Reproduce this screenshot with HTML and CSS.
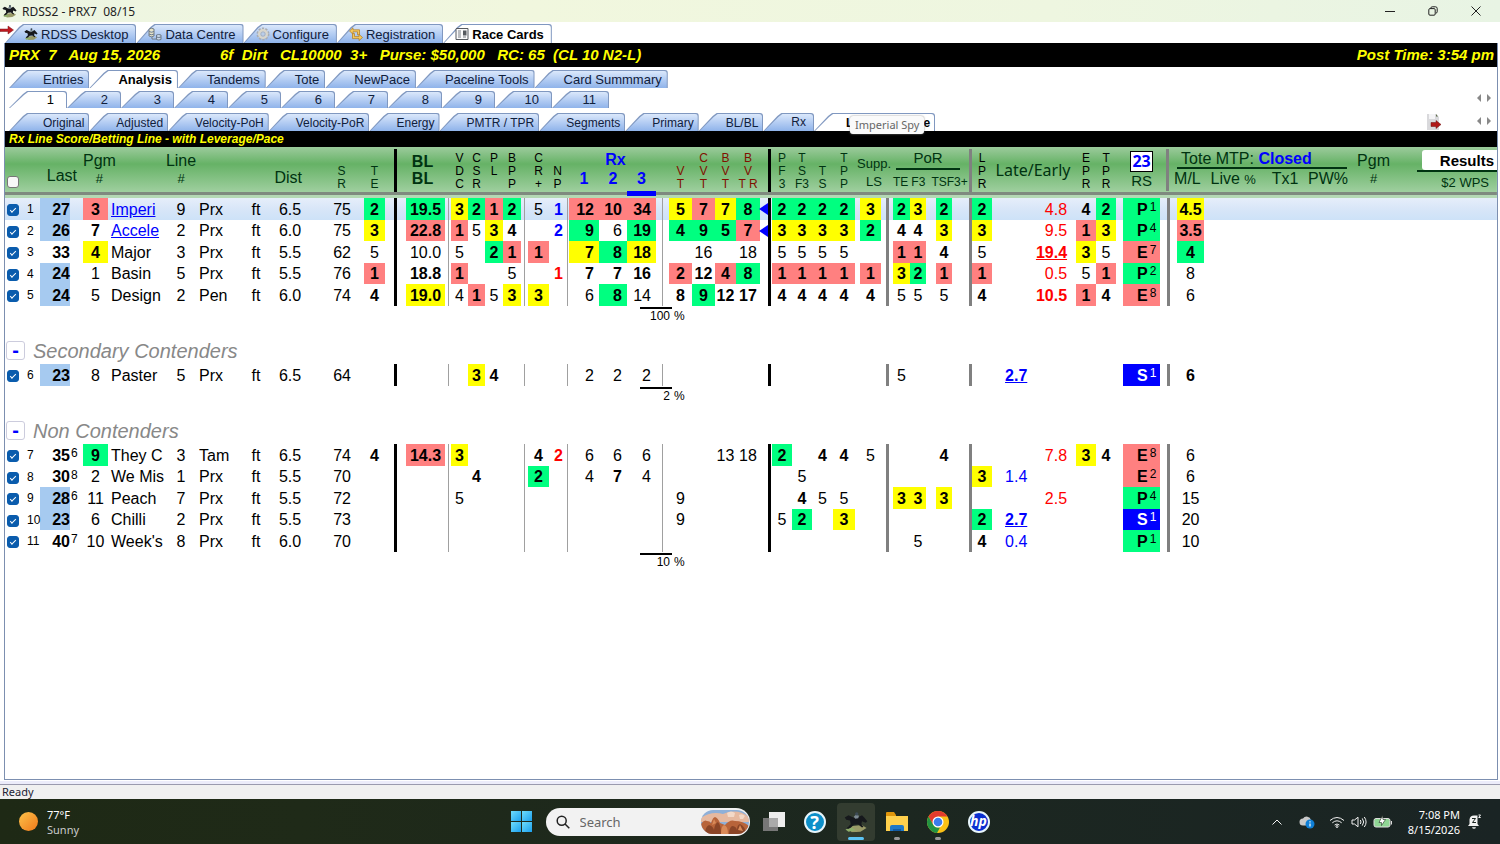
FILE: index.html
```html
<!DOCTYPE html>
<html lang="en">
<head>
<meta charset="utf-8">
<title>RDSS2 - PRX7 08/15</title>
<link rel="stylesheet" href="styles.css">
</head>
<body>
<svg class="defs" aria-hidden="true">
  <symbol id="horse" viewBox="0 0 16 14">
    <path fill="#9a9a68" d="M3 10l9-1 3 2-4 2.500-6 .3z"/>
    <path fill="#8fae6a" d="M1 12l4-1.500 3 2-5 1z"/>
    <path fill="#16181c" d="M.5 4L3 2.500l3.500 1.700 3.500-.7 2-1 1.500 1.500L15.500 6.500l-1 1-2.500-1-.5 2 1.500 1.600-1 .6-2.500-2-3 .2-2 2-2 .8-.5-.8L4.500 8.500 4 6 1.500 5.500z"/>
    <path fill="#7d8a93" d="M6.500 3.500L8 2l2 .8-.5 1.700-2 .4z"/>
    <circle cx="8.500" cy="1.600" r="1.100" fill="#3c4a55"/>
  </symbol>
</svg>

<header class="titlebar">
  <svg class="app-icon" aria-hidden="true"><use href="#horse"/></svg>
  <span class="app-title">RDSS2 - PRX7&nbsp; 08/15</span>
  <div class="window-buttons">
    <button type="button" aria-label="Minimize"><svg viewBox="0 0 10 10"><path d="M0 5.500h10"/></svg></button>
    <button type="button" aria-label="Restore"><svg viewBox="0 0 10 10"><path d="M.8 3.800q0-1.200 1.200-1.200h4q1.200 0 1.200 1.200V8q0 1.200-1.200 1.200H2Q.8 9.200.8 8zM2.800 2.400V2Q3 .8 4.200.8h3.300q1.700 0 1.700 1.700v3.300Q9.200 7 7.800 7.200"/></svg></button>
    <button type="button" aria-label="Close"><svg viewBox="0 0 10 10"><path d="M.5.5l9 9M9.500.5l-9 9"/></svg></button>
  </div>
</header>

<main class="window">
  <nav class="tabs main-tabs" role="tablist" aria-label="Modules">
    <svg class="exit-arrow" viewBox="0 0 14 10" aria-hidden="true"><path fill="#c01820" stroke="#7c1a1a" stroke-width=".5" d="M0 4h8V1l5.500 4L8 9V6.500H0z"/></svg>
    <button type="button" class="tab" role="tab"><svg viewBox="0 0 16 14"><use href="#horse"/></svg>RDSS Desktop</button>
    <button type="button" class="tab" role="tab"><svg viewBox="0 0 14 14"><g fill="#e8e4c8" stroke="#66727e" stroke-width=".9"><path d="M1 2q2.500-1.500 5 0v7q-2.500 1.500-5 0zM1 4.500q2.500 1.500 5 0M1 7q2.500 1.500 5 0"/><path fill="#c9d8ea" d="M8.500 8q2.200-1 4.500 0v4.500q-2.300 1-4.500 0zM8.500 10q2.200 1 4.500 0M4 10v2h4"/></g></svg>Data Centre</button>
    <button type="button" class="tab" role="tab"><svg viewBox="0 0 14 14"><circle cx="7" cy="7" r="5.500" fill="none" stroke="#a9adb3" stroke-width="2" stroke-dasharray="2.200 1.250"/><circle cx="7" cy="7" r="3.800" fill="none" stroke="#d9d6cc" stroke-width="2.400"/><circle cx="7" cy="7" r="2.200" fill="#b9cdea" stroke="#999" stroke-width=".5"/></svg>Configure</button>
    <button type="button" class="tab" role="tab"><svg viewBox="0 0 14 14"><g fill="#f5c95c" stroke="#b07a1e" stroke-width=".7"><path d="M.5 4L4 .8v2h6.500v5H8.500v-3H4v2.400z"/><path d="M13.500 10.500L10 13.600v-2H3.500v-5h2v3H10V7.300z"/></g></svg>Registration</button>
    <button type="button" class="tab active" role="tab" aria-selected="true"><svg viewBox="0 0 14 14"><path fill="#fafafa" stroke="#55595e" d="M1 1.500h12v11H1z"/><path stroke="#7a7f85" d="M3 4h3M3 6h3M3 8h3M3 10h3M8 10h3"/><path fill="#55595e" d="M8 3.500h3.500v5H8z"/></svg>Race Cards</button>
  </nav>

  <section class="panel">
    <div class="race-bar">
      <span class="race-id">PRX  7   Aug 15, 2026</span>
      <span class="race-info">6f  Dirt   CL10000  3+   Purse: $50,000   RC: 65  (CL 10 N2-L)</span>
      <span class="post-time">Post Time: 3:54 pm</span>
    </div>

    <nav class="tabs view-tabs" role="tablist" aria-label="Views">
      <button type="button" class="tab" role="tab">Entries</button>
      <button type="button" class="tab active" role="tab" aria-selected="true">Analysis</button>
      <button type="button" class="tab" role="tab">Tandems</button>
      <button type="button" class="tab" role="tab">Tote</button>
      <button type="button" class="tab" role="tab">NewPace</button>
      <button type="button" class="tab" role="tab">Paceline Tools</button>
      <button type="button" class="tab" role="tab">Card Summmary</button>
    </nav>

    <nav class="tabs race-tabs" role="tablist" aria-label="Races">
      <button type="button" class="tab active" role="tab" aria-selected="true">1</button>
      <button type="button" class="tab" role="tab">2</button>
      <button type="button" class="tab" role="tab">3</button>
      <button type="button" class="tab" role="tab">4</button>
      <button type="button" class="tab" role="tab">5</button>
      <button type="button" class="tab" role="tab">6</button>
      <button type="button" class="tab" role="tab">7</button>
      <button type="button" class="tab" role="tab">8</button>
      <button type="button" class="tab" role="tab">9</button>
      <button type="button" class="tab wide" role="tab">10</button>
      <button type="button" class="tab wide" role="tab">11</button>
      <span class="tab-scroll"><button type="button" class="prev" aria-label="Previous"></button><button type="button" class="next" aria-label="Next"></button></span>
    </nav>

    <nav class="tabs report-tabs" role="tablist" aria-label="Reports">
      <button type="button" class="tab" role="tab">Original</button>
      <button type="button" class="tab" role="tab">Adjusted</button>
      <button type="button" class="tab" role="tab">Velocity-PoH</button>
      <button type="button" class="tab" role="tab">Velocity-PoR</button>
      <button type="button" class="tab" role="tab">Energy</button>
      <button type="button" class="tab" role="tab">PMTR / TPR</button>
      <button type="button" class="tab" role="tab">Segments</button>
      <button type="button" class="tab" role="tab">Primary</button>
      <button type="button" class="tab" role="tab">BL/BL</button>
      <button type="button" class="tab short" role="tab">Rx</button>
      <span class="tip-anchor"><button type="button" class="tab active" role="tab" aria-selected="true">Leverage/Pace</button><span class="tooltip" role="tooltip">Imperial Spy</span></span>
      <button type="button" class="export" aria-label="Export"><svg viewBox="0 0 16 18"><path fill="#d9d9dc" d="M1 1h9l3 3v13H1z"/><path fill="#f4f4f6" d="M3 1h6v5H3z"/><path fill="#5d6b4a" d="M10 1l2 2.500h-2z"/><path fill="#b01818" stroke="#6c1010" stroke-width=".5" d="M5 9.500h5v-2l5 4-5 4v-2H5z"/></svg></button>
      <span class="tab-scroll"><button type="button" class="prev" aria-label="Previous"></button><button type="button" class="next" aria-label="Next"></button></span>
    </nav>

    <h1 class="report-title">Rx Line Score/Betting Line - with Leverage/Pace</h1>

    <table class="card">
      <colgroup>
        <col class="w20"><col class="w15"><col class="w30"><col class="w13"><col class="w25"><col class="w57"><col class="w32"><col class="w49"><col class="w20"><col class="w48"><col class="w50"><col class="w21">
        <col class="w21"><col class="w39"><col class="w6"><col class="w17"><col class="w17"><col class="w18"><col class="w18"><col class="w7"><col class="w21"><col class="w17"><col class="w3"><col class="w30"><col class="w28"><col class="w29"><col class="w13">
        <col class="w23"><col class="w23"><col class="w21"><col class="w24"><col class="w6"><col class="w6"><col class="w20"><col class="w20"><col class="w21"><col class="w22"><col class="w5"><col class="w21"><col class="w12">
        <col class="w17"><col class="w16"><col class="w10"><col class="w16"><col class="w16"><col class="w4"><col class="w20"><col class="w38"><col class="w46"><col class="w20"><col class="w20"><col class="w7"><col class="w37"><col class="w17"><col class="w27"><col>
      </colgroup>
      <thead>
        <tr>
          <th class="pick"><input type="checkbox" aria-label="Select all"></th>
          <th colspan="3" class="h-last">Last</th>
          <th colspan="2" class="h-top left"><span class="stack">Pgm<br><small>#</small></span></th>
          <th class="h-top"><span class="stack">Line<br><small>#</small></span></th>
          <th colspan="3" class="h-dist">Dist</th>
          <th class="v h-sr">S<br>R</th>
          <th class="v">T<br>E</th>
          <th class="thick"></th>
          <th class="h-bl">BL<br>BL</th>
          <th></th>
          <th class="v dark">V<br>D<br>C</th>
          <th class="v dark">C<br>S<br>R</th>
          <th class="v dark">P<br>L<br>&nbsp;</th>
          <th class="v dark">B<br>P<br>P</th>
          <th></th>
          <th class="v dark">C<br>R<br>+</th>
          <th class="v dark">N<br>P</th>
          <th></th>
          <th colspan="3" class="h-rx"><div class="rx"><span class="rx-name">Rx</span><span>1</span><span>2</span><span class="sorted">3</span></div></th>
          <th></th>
          <th class="v maroon">V<br>T</th>
          <th class="v maroon">C<br>V<br>T</th>
          <th class="v maroon">B<br>V<br>T</th>
          <th class="v maroon">B<br>V<br>T R</th>
          <th></th>
          <th class="thick"></th>
          <th class="v">P<br>F<br>3</th>
          <th class="v">T<br>S<br>F3</th>
          <th class="v">T<br>S</th>
          <th class="v">T<br>P<br>P</th>
          <th colspan="3" class="h-supp">Supp.<br>LS</th>
          <th colspan="5" class="h-por"><div class="por">PoR</div><div class="por-sub"><span>TE</span><span>F3</span><span>TSF3+</span></div></th>
          <th class="mid"></th>
          <th class="v dark">L<br>P<br>R</th>
          <th colspan="2" class="h-late">Late/Early</th>
          <th class="v dark">E<br>P<br>R</th>
          <th class="v dark">T<br>P<br>R</th>
          <th></th>
          <th class="h-rs"><span class="rs-count">23</span><br>RS</th>
          <th colspan="3" class="h-tote"><div class="tote">
            <div class="tote-main"><div class="mtp">Tote MTP: <b>Closed</b></div><div class="tote-cols"><span>M/L</span><span>Live <small>%</small></span><span>Tx1</span><span>PW%</span></div></div>
            <span class="stack tote-pgm">Pgm<br><small>#</small></span>
            <div class="results"><button type="button">Results</button><div>$2 WPS</div></div>
          </div></th>
        </tr>
      </thead>
      <tbody>
        <tr class="current">
          <td><input type="checkbox" checked aria-label="Select 1"><td>1<td class="s">27<td><td class="r">3<td><a href="#imperi">Imperi</a><td>9<td>Prx<td>ft<td>6.5<td>75<td class="g">2
          <td class="thick"><td class="g">19.5<td class="thin"><td class="y">3<td class="g">2<td class="r">1<td class="g">2<td class="thin"><td>5<td class="blue">1<td class="thin"><td class="r">12<td class="r">10<td class="r">34<td class="thin">
          <td class="y">5<td class="r">7<td class="y">7<td class="g">8<td class="arrow"><td class="thick"><td class="g">2<td class="g">2<td class="g">2<td class="g">2<td><td class="y">3<td class="mid">
          <td class="g">2<td class="y">3<td><td class="g">2<td><td class="mid"><td class="g">2<td><td>4.8<td class="b">4<td class="g">2<td><td class="g">P<sup>1</sup><td class="mid"><td class="y">4.5<td></tr>
        <tr>
          <td><input type="checkbox" checked aria-label="Select 2"><td>2<td class="s">26<td><td class="b">7<td><a href="#accele">Accele</a><td>2<td>Prx<td>ft<td>6.0<td>75<td class="y">3
          <td class="thick"><td class="r">22.8<td class="thin"><td class="r">1<td>5<td class="y">3<td class="b">4<td class="thin"><td><td class="blue">2<td class="thin"><td class="g">9<td>6<td class="g">19<td class="thin">
          <td class="g">4<td class="g">9<td class="g">5<td class="r">7<td class="arrow"><td class="thick"><td class="y">3<td class="y">3<td class="y">3<td class="y">3<td><td class="g">2<td class="mid">
          <td class="b">4<td class="b">4<td><td class="y">3<td><td class="mid"><td class="y">3<td><td>9.5<td class="r">1<td class="y">3<td><td class="g">P<sup>4</sup><td class="mid"><td class="r">3.5<td></tr>
        <tr>
          <td><input type="checkbox" checked aria-label="Select 3"><td>3<td>33<td><td class="y">4<td>Major<td>3<td>Prx<td>ft<td>5.5<td>62<td>5
          <td class="thick"><td>10.0<td class="thin"><td>5<td><td class="g">2<td class="r">1<td class="thin"><td class="r">1<td><td class="thin"><td class="y">7<td class="g">8<td class="y">18<td class="thin">
          <td><td>16<td><td>18<td><td class="thick"><td>5<td>5<td>5<td>5<td><td><td class="mid">
          <td class="r">1<td class="r">1<td><td class="b">4<td><td class="mid"><td>5<td><td class="b u">19.4<td class="y">3<td>5<td><td class="r">E<sup>7</sup><td class="mid"><td class="g">4<td></tr>
        <tr>
          <td><input type="checkbox" checked aria-label="Select 4"><td>4<td class="s">24<td><td>1<td>Basin<td>5<td>Prx<td>ft<td>5.5<td>76<td class="r">1
          <td class="thick"><td class="b">18.8<td class="thin"><td class="r">1<td><td><td>5<td class="thin"><td><td class="red">1<td class="thin"><td class="b">7<td class="b">7<td class="b">16<td class="thin">
          <td class="r">2<td class="b">12<td class="r">4<td class="g">8<td><td class="thick"><td class="r">1<td class="r">1<td class="r">1<td class="r">1<td><td class="r">1<td class="mid">
          <td class="y">3<td class="g">2<td><td class="r">1<td><td class="mid"><td class="r">1<td><td>0.5<td>5<td class="r">1<td><td class="g">P<sup>2</sup><td class="mid"><td>8<td></tr>
        <tr>
          <td><input type="checkbox" checked aria-label="Select 5"><td>5<td class="s">24<td><td>5<td>Design<td>2<td>Pen<td>ft<td>6.0<td>74<td class="b">4
          <td class="thick"><td class="y">19.0<td class="thin"><td>4<td class="r">1<td>5<td class="y">3<td class="thin"><td class="y">3<td><td class="thin"><td>6<td class="g">8<td>14<td class="thin">
          <td class="b">8<td class="g">9<td class="b">12<td class="b">17<td><td class="thick"><td class="b">4<td class="b">4<td class="b">4<td class="b">4<td><td class="b">4<td class="mid">
          <td>5<td>5<td><td>5<td><td class="mid"><td class="b">4<td><td class="b">10.5<td class="r">1<td class="b">4<td><td class="r">E<sup>8</sup><td class="mid"><td>6<td></tr>
      </tbody>
      <tbody class="break">
        <tr class="total"><td colspan="56"><span>100</span>%</td></tr>
        <tr class="group"><th colspan="56" scope="rowgroup"><button type="button" aria-label="Collapse Secondary Contenders">-</button>Secondary Contenders</th></tr>
      </tbody>
      <tbody>
        <tr>
          <td><input type="checkbox" checked aria-label="Select 6"><td>6<td class="s">23<td><td>8<td>Paster<td>5<td>Prx<td>ft<td>6.5<td>64<td>
          <td class="thick"><td><td class="thin"><td><td class="y">3<td class="b">4<td><td class="thin"><td><td><td class="thin"><td>2<td>2<td>2<td class="thin">
          <td><td><td><td><td><td class="thick"><td><td><td><td><td><td><td>
          <td>5<td><td><td><td><td class="mid"><td><td class="b u">2.7<td><td><td><td><td class="deep">S<sup>1</sup><td class="mid"><td class="b">6<td></tr>
      </tbody>
      <tbody class="break">
        <tr class="total"><td colspan="56"><span>2</span>%</td></tr>
        <tr class="group"><th colspan="56" scope="rowgroup"><button type="button" aria-label="Collapse Non Contenders">-</button>Non Contenders</th></tr>
      </tbody>
      <tbody>
        <tr>
          <td><input type="checkbox" checked aria-label="Select 7"><td>7<td>35<td>6<td class="g">9<td>They C<td>3<td>Tam<td>ft<td>6.5<td>74<td class="b">4
          <td class="thick"><td class="r">14.3<td class="thin"><td class="y">3<td><td><td><td class="thin"><td class="b">4<td class="red">2<td class="thin"><td>6<td>6<td>6<td class="thin">
          <td><td><td>13<td>18<td><td class="thick"><td class="g">2<td><td class="b">4<td class="b">4<td><td>5<td class="mid">
          <td><td><td><td class="b">4<td><td class="mid"><td><td><td>7.8<td class="y">3<td class="b">4<td><td class="r">E<sup>8</sup><td class="mid"><td>6<td></tr>
        <tr>
          <td><input type="checkbox" checked aria-label="Select 8"><td>8<td>30<td>8<td>2<td>We Mis<td>1<td>Prx<td>ft<td>5.5<td>70<td>
          <td class="thick"><td><td class="thin"><td><td class="b">4<td><td><td class="thin"><td class="g">2<td><td class="thin"><td>4<td class="b">7<td>4<td class="thin">
          <td><td><td><td><td><td class="thick"><td><td>5<td><td><td><td><td class="mid">
          <td><td><td><td><td><td class="mid"><td class="y">3<td>1.4<td><td><td><td><td class="r">E<sup>2</sup><td class="mid"><td>6<td></tr>
        <tr>
          <td><input type="checkbox" checked aria-label="Select 9"><td>9<td class="s">28<td>6<td>11<td>Peach<td>7<td>Prx<td>ft<td>5.5<td>72<td>
          <td class="thick"><td><td class="thin"><td>5<td><td><td><td class="thin"><td><td><td class="thin"><td><td><td><td class="thin">
          <td>9<td><td><td><td><td class="thick"><td><td class="b">4<td>5<td>5<td><td><td class="mid">
          <td class="y">3<td class="y">3<td><td class="y">3<td><td class="mid"><td><td><td>2.5<td><td><td><td class="g">P<sup>4</sup><td class="mid"><td>15<td></tr>
        <tr>
          <td><input type="checkbox" checked aria-label="Select 10"><td>10<td class="s">23<td><td>6<td>Chilli<td>2<td>Prx<td>ft<td>5.5<td>73<td>
          <td class="thick"><td><td class="thin"><td><td><td><td><td class="thin"><td><td><td class="thin"><td><td><td><td class="thin">
          <td>9<td><td><td><td><td class="thick"><td>5<td class="g">2<td><td class="y">3<td><td><td class="mid">
          <td><td><td><td><td><td class="mid"><td class="g">2<td class="b u">2.7<td><td><td><td><td class="deep">S<sup>1</sup><td class="mid"><td>20<td></tr>
        <tr>
          <td><input type="checkbox" checked aria-label="Select 11"><td>11<td>40<td>7<td>10<td>Week's<td>8<td>Prx<td>ft<td>6.0<td>70<td>
          <td class="thick"><td><td class="thin"><td><td><td><td><td class="thin"><td><td><td class="thin"><td><td><td><td class="thin">
          <td><td><td><td><td><td class="thick"><td><td><td><td><td><td><td class="mid">
          <td><td>5<td><td><td><td class="mid"><td class="b">4<td>0.4<td><td><td><td><td class="g">P<sup>1</sup><td class="mid"><td>10<td></tr>
      </tbody>
      <tbody class="break">
        <tr class="total"><td colspan="56"><span>10</span>%</td></tr>
      </tbody>
    </table>
  </section>
</main>

<div class="statusbar">Ready</div>

<footer class="taskbar">
  <div class="weather"><span class="sun"></span><div>77°F<br><span>Sunny</span></div></div>
  <div class="pinned">
    <button type="button" class="start" aria-label="Start"><i></i><i></i><i></i><i></i></button>
    <label class="search">
      <svg viewBox="0 0 14 14" aria-hidden="true"><circle cx="5.700" cy="5.700" r="4.500"/><path d="M9 9l4.300 4.300"/></svg>
      <input type="search" placeholder="Search" aria-label="Search">
      <svg class="scene" viewBox="0 0 48 24" preserveAspectRatio="none" aria-hidden="true"><path fill="#8fb0d8" d="M0 0h48v24H0z"/><path fill="#e6b9a0" d="M0 8q10-7 22-4 14-6 26 3v5H0z"/><path fill="#f3d9c8" d="M26 3q4-3 8 0l-1 4h-6zM38 5q3-2 6 1l-2 3h-3z"/><path fill="#b8643a" d="M0 14q3-5 6-3 3 0 4 2 2-6 4-6 3 1 5 6l5 2q5-6 10-4 8 0 14 5v9H0z"/><path fill="#8a4527" d="M4 24q0-7 4-9 4 1 5 5 1-7 4-8 3 3 3 12zM28 24q0-6 3-8 4 0 5 4 0-5 3-6 5 2 6 10z"/><path fill="#d98a58" d="M13 9l2 4-4 2zM20 24q0-8 3-9 4 1 4 9zM39 15l3 6-5-1z"/></svg>
    </label>
    <button type="button" aria-label="Task view"><svg viewBox="0 0 24 24"><path fill="#eee" d="M7 2h16v15H7z"/><path fill="#777" d="M1 8h15v13H1z"/><path fill="#aaa" d="M7 8h9v9H7z"/></svg></button>
    <button type="button" class="help" aria-label="Help"><span>?</span></button>
    <button type="button" class="open focused" aria-label="RDSS2"><svg viewBox="0 0 16 14"><use href="#horse"/></svg></button>
    <button type="button" class="open" aria-label="File Explorer"><svg viewBox="0 0 24 24"><path fill="#e0960c" d="M1 3q0-1 1-1h7l2 3v5H1z"/><path fill="#ffd04c" d="M1 6h22v15H1z"/><path fill="#1f78c8" d="M5 21v-4q0-2 2-2h10q2 0 2 2v4z"/><path fill="#125ba3" d="M8 19h8v2H8z"/></svg></button>
    <button type="button" class="open" aria-label="Chrome"><svg viewBox="0 0 24 24"><circle cx="12" cy="12" r="11" fill="#fbc116"/><path fill="#e33b2e" d="M2.500 6.500A11 11 0 0 1 21.500 6.500H12L7.200 14.700z"/><path fill="#229342" d="M2.500 6.500L7.200 14.700Q9 17.500 12 17.500h2L11 23A11 11 0 0 1 2.500 6.500z"/><circle cx="12" cy="12" r="5.500" fill="#fff"/><circle cx="12" cy="12" r="4.300" fill="#3b7ded"/></svg></button>
    <button type="button" class="hp" aria-label="HP"><span>hp</span></button>
  </div>
  <div class="tray">
    <svg class="chevron" viewBox="0 0 10 10" aria-hidden="true"><path d="M.5 7.500L5 3l4.500 4.500"/></svg>
    <svg class="cloud" viewBox="0 0 16 14" aria-hidden="true"><path fill="#c9c9c9" d="M4 10.500a3.500 3.500 0 0 1 0-7 4.500 4.500 0 0 1 8 1.500 3 3 0 0 1 0 5.500z"/><circle cx="11" cy="9" r="4.500" fill="#0f7fd6"/><path stroke="#fff" stroke-width="1.200" d="M11 8.500v3M11 6.300v1.200"/></svg>
    <svg class="wifi" viewBox="0 0 16 12" aria-hidden="true"><path d="M1 4.500q7-6 14 0M3.300 6.800q4.700-4 9.400 0M5.600 9q2.400-2 4.800 0"/><circle cx="8" cy="10.500" r="1"/></svg>
    <svg class="sound" viewBox="0 0 16 12" aria-hidden="true"><path d="M1 4h2.500L7 1.200v9.600L3.500 8H1zM9.300 4q1.400 2 0 4M11.300 2.400q2.700 3.600 0 7.200M13.300 1q3.600 5 0 10"/></svg>
    <svg class="battery" viewBox="0 0 20 14" aria-hidden="true"><rect x="1" y="3.500" width="16" height="8.500" rx="2" fill="#8fd694" stroke="#ddd"/><path stroke="#ddd" d="M18.500 6v3.500"/><path fill="#fff" stroke="#1e2a1e" stroke-width=".6" d="M9.500.5L6 7.500h2.500v3l4-6H10z"/></svg>
    <div class="clock">7:08 PM<br>8/15/2026</div>
    <svg class="bell" viewBox="0 0 14 16" aria-hidden="true"><path fill="#f2f2f2" d="M1 12l1.500-2V5.500Q3 1.500 7 1.500h3.500v8.500l1.500 2zM5 13.200h4q-.4 1.600-2 1.600t-2-1.600z"/><path fill="none" stroke="#1c2622" d="M5 4.500h3.500L5.500 8.500H9"/><path fill="none" stroke="#f2f2f2" d="M11.500 1h2L11.700 3.500h2"/></svg>
  </div>
</footer>
</body>
</html>
```
FILE: styles.css
```css
* { box-sizing: border-box; }

body {
  margin: 0;
  min-height: 100vh;
  display: flex;
  flex-direction: column;
  font-family: "Liberation Sans", Arial, sans-serif;
  font-size: 16px;
  color: #000;
  background: #fff;
}

button { font: inherit; color: inherit; border: 0; padding: 0; margin: 0; background: none; }
.defs { display: none; }

/* Title bar */
.titlebar {
  display: flex;
  align-items: center;
  height: 22px;
  padding-left: 2px;
  background: linear-gradient(90deg, #edf5e2, #f1f7de 35%, #eef6e0 70%, #e8f4e4);
  font: 12px "Noto Sans", sans-serif;
  color: #222;
}
.app-icon { width: 15px; height: 14px; margin-right: 5px; }
.window-buttons { display: flex; margin-left: auto; padding-right: 3px; }
.window-buttons button { width: 43px; height: 20px; display: grid; place-items: center; }
.window-buttons svg { width: 10px; height: 10px; fill: none; stroke: #222; }

/* Window frame */
.window {
  flex: 1;
  display: flex;
  flex-direction: column;
  padding: 2px 2px 4px 4px;
  background: #fff;
  border-bottom: 1px solid #9a9aae;
  box-shadow: inset 0 -3px #ececfa;
}
.panel {
  flex: 1;
  border: 1px solid #7c8fb0;
  border-width: 0 1px 1px;
  background: #fff;
}

/* Tabs */
.tabs { display: flex; align-items: flex-end; font-size: 13px; }
.tab {
  position: relative;
  z-index: 0;
  display: flex;
  align-items: center;
  justify-content: flex-end;
  height: 18px;
  padding: 1px 6px 0 29px;
  white-space: nowrap;
  color: #10203c;
  background: #8098c0;
  border-radius: 0 3px 0 0;
  clip-path: polygon(0 100%, 14px 3px, 18px 0, 100% 0, 100% 100%);
}
.tab::before {
  content: "";
  position: absolute;
  z-index: -1;
  inset: 1px 1px 0 1px;
  border-radius: 0 3px 0 0;
  background: linear-gradient(#dbe8fb, #b4cdf3 50%, #8fb3ea);
  clip-path: polygon(0 100%, 14px 3px, 18px 0, 100% 0, 100% 100%);
}
.tab.active { font-weight: bold; color: #000; }
.tab.active::before { background: #fff; }
.main-tabs { height: 19px; }
.main-tabs .tab { height: 19px; padding: 1px 8px 0 12px; }
.main-tabs .tab svg { width: 14px; height: 14px; margin-right: 3px; }
.main-tabs .tab:nth-of-type(1) { padding-left: 19px; }
.exit-arrow { width: 14px; height: 10px; margin: 0 -9px 8px -4px; }
.view-tabs { height: 21px; padding-left: 4px; }
.race-tabs { height: 20px; padding-left: 4px; }
.race-tabs .tab { width: 53px; height: 17px; padding: 0 13px 0 0; }
.race-tabs .tab:nth-child(even) { width: 54px; }
.race-tabs .tab:first-child { width: 58px; }
.race-tabs .tab.wide { width: 57px; }
.race-tabs .tab.active { font-weight: normal; }
.report-tabs { height: 23px; padding-left: 4px; font-size: 12px; }
.report-tabs .tab { padding: 1px 5px 0 27px; }
.report-tabs .short { padding: 0 8px 0 28px; }
.report-tabs .active { padding-left: 32px; }
.view-tabs .tab:first-child, .report-tabs > .tab:first-child { padding-left: 34px; }
.tab-scroll { display: flex; gap: 6px; width: 20px; height: 12px; margin: 0 0 2px auto; }
.export + .tab-scroll { margin-left: 35px; }
.tab-scroll button { width: 0; height: 0; border: 4px solid transparent; }
.tab-scroll .prev { border-left-width: 0; border-right-color: #888; }
.tab-scroll .next { border-right-width: 0; border-left-color: #888; }
.export { width: 16px; height: 18px; margin-left: auto; }
.export svg { display: block; width: 16px; height: 18px; }
.tip-anchor { position: relative; }
.tooltip {
  position: absolute;
  z-index: 2;
  left: 36px;
  top: 3px;
  padding: 0 5px;
  line-height: 18px;
  white-space: nowrap;
  font-family: "Noto Sans", sans-serif;
  font-size: 11px;
  color: #666;
  background: #fafafa;
  border-radius: 3px;
  box-shadow: 0 0 2px #888;
}

/* Black bars */
.race-bar {
  display: flex;
  height: 24px;
  padding: 0 3px 0 4px;
  background: #000;
  color: #ff0;
  font: italic bold 15px/24px "Liberation Sans", Arial, sans-serif;
  white-space: pre;
}
.race-id { width: 211px; }
.post-time { margin-left: auto; }
.report-title {
  margin: 0;
  height: 16px;
  padding-left: 4px;
  background: #000;
  color: #ff0;
  font: italic bold 12px/16px "Liberation Sans", Arial, sans-serif;
}

/* Race card */
.card { width: 100%; table-layout: fixed; border-collapse: separate; border-spacing: 0; }
.card td, .card th { padding: 0; text-align: center; white-space: nowrap; font-weight: normal; }
.w3 { width: 3px; } .w4 { width: 4px; } .w5 { width: 5px; } .w6 { width: 6px; } .w7 { width: 7px; }
.w10 { width: 10px; } .w12 { width: 12px; } .w13 { width: 13px; } .w15 { width: 15px; } .w16 { width: 16px; }
.w17 { width: 17px; } .w18 { width: 18px; } .w20 { width: 20px; } .w21 { width: 21px; } .w22 { width: 22px; }
.w23 { width: 23px; } .w24 { width: 24px; } .w25 { width: 25px; } .w27 { width: 27px; } .w28 { width: 28px; }
.w29 { width: 29px; } .w30 { width: 30px; } .w32 { width: 32px; } .w37 { width: 37px; } .w38 { width: 38px; }
.w39 { width: 39px; } .w46 { width: 46px; } .w48 { width: 48px; } .w49 { width: 49px; } .w50 { width: 50px; }
.w57 { width: 57px; }

.card thead tr {
  height: 51px;
  background: linear-gradient(#9ccb9c 0, #66b266 17px, #9fcf9f 45px, #7f8a7f 45px, #7f8a7f 48px, #b4d8b4 48px);
}
.card thead th { height: 51px; vertical-align: top; color: #031; line-height: 17px; }
.card th small { font-size: 13px; line-height: 13px; }
.card thead .left { text-align: left; }
.stack { display: inline-block; text-align: center; }
.card thead .pick { vertical-align: bottom; padding: 0 5px 10px 0; }
.card thead .h-last { padding: 20px 6px 0 0; text-align: right; }
.card thead .h-top { padding-top: 5px; }
.card thead .h-dist { padding: 22px 12px 0 0; text-align: right; }
.card thead .v { font-size: 12px; line-height: 13px; vertical-align: bottom; padding-bottom: 7px; }
.card thead .h-sr { padding-left: 5px; }
.card thead .dark { color: #000; }
.card thead .maroon { color: #801000; }
.card thead .h-bl { font-weight: bold; padding: 6px 6px 0 0; }
.card thead .h-rx { color: #00f; font-weight: bold; }
.rx { display: grid; grid-template-columns: 30px 28px 29px; grid-template-rows: 23px 26px; }
.rx-name { grid-column: 1 / -1; padding: 4px 0 0 6px; }
.sorted { border-bottom: 5px solid #00f; }
.card thead .h-supp { font-size: 13px; line-height: 18px; padding-top: 8px; }
.card thead .h-por { font-size: 12px; }
.por { font-size: 15px; line-height: 20px; margin: 1px 8px 0 3px; border-bottom: 2px solid #031; }
.por-sub { display: flex; gap: 3px; padding-top: 4px; }
.por-sub span:last-child { margin-left: 3px; }
.card thead .h-late { font: 16px/20px "Noto Sans", sans-serif; padding: 13px 2px 0 0; }
.card thead .h-rs { padding-top: 4px; font-size: 15px; }
.rs-count {
  display: inline-block;
  width: 23px;
  border: 1px solid #000;
  background: #fff;
  color: #00f;
  font: bold 16px/19px "Noto Sans", sans-serif;
}
.card thead .h-tote { text-align: left; background: linear-gradient(#808080, #808080) 6px 2px / 3px 42px no-repeat; }
.tote { display: flex; padding-left: 14px; }
.tote-main { width: 174px; padding-top: 3px; }
.mtp { margin: 0 1px 0 3px; padding-left: 4px; border-bottom: 2px solid #031; white-space: pre; }
.mtp b { color: #00f; }
.tote-cols { display: flex; justify-content: space-between; line-height: 19px; }
.tote-cols span:nth-child(2) { margin-right: 6px; }
.tote-pgm { margin-left: 9px; padding-top: 5px; }
.results { width: 80px; margin-left: auto; padding-top: 3px; font-size: 13px; text-align: right; }
.results button {
  display: block;
  width: 75px;
  height: 20px;
  margin-left: auto;
  padding-right: 3px;
  text-align: right;
  font-size: 15px;
  font-weight: bold;
  color: #000;
  background: #fff;
  border-radius: 3px 0 0 3px;
}
.results div { padding: 2px 8px 0 0; border-top: 2px solid #031; }

.card tbody tr { height: 22px; }
.card tbody tr:nth-child(even) { height: 21px; }
.card tbody td { line-height: 21px; }
.card .current { background: linear-gradient(#e6eefa, #d8e6f8 50%, #cde2f8); }
.card .s { background: #a6caf0; }
.card .r { background: #ff8080; font-weight: bold; }
.card .g { background: #00ff80; font-weight: bold; }
.card .y { background: #ff0; font-weight: bold; }
.card .deep { background: #00f; color: #fff; font-weight: bold; }
.card .b { font-weight: bold; }
.card .red { color: #f00; font-weight: bold; }
.card .blue { color: #00f; font-weight: bold; }
.card .u { text-decoration: underline; }
.card a { color: #00f; }
.card .thick { background: linear-gradient(#000, #000) center / 3px 100% no-repeat; }
.card .mid { background: linear-gradient(#808080, #808080) center / 3px 100% no-repeat; }
.card .thin { background: linear-gradient(#a0a0a0, #a0a0a0) center / 1px 100% no-repeat; }
.card thead .thick, .card thead .mid { background-size: 3px 43px; background-position: center 2px; }
.card tbody td:nth-child(40) { background: linear-gradient(#808080, #808080) center / 3px 100% no-repeat; }
.arrow::before {
  content: "";
  display: block;
  width: 0;
  margin-left: -1px;
  border: solid transparent;
  border-width: 6px 9px 6px 0;
  border-right-color: #00f;
}

.card td:nth-child(1) { padding-right: 5px; }
.card td:nth-child(2) { font-size: 12px; text-align: left; padding-left: 2px; line-height: 18px; }
.card td:nth-child(3) { text-align: right; font-weight: bold; }
.card td:nth-child(4) { text-align: left; padding-left: 1px; font-size: 12px; vertical-align: top; line-height: 18px; }
.card td:nth-child(6) { text-align: left; padding-left: 3px; }
.card td:nth-child(8) { text-align: left; padding-left: 2px; }
.card td:nth-child(11) { text-align: right; padding-right: 13px; }
.card td:nth-child(22) { padding-left: 2px; }
.card td:nth-child(n+24):nth-child(-n+26) { text-align: right; padding-right: 5px; }
.card td:nth-child(48) { text-align: left; padding-left: 13px; color: #00f; }
.card td:nth-child(49) { text-align: right; padding-right: 9px; color: #f00; }
.card td:nth-child(53) { text-align: left; padding-left: 14px; }
.card sup { font-size: 12px; font-weight: normal; line-height: 12px; vertical-align: 4px; margin-left: 2px; }

.card input {
  appearance: none;
  display: block;
  width: 12px;
  height: 12px;
  margin: 2px auto 0;
  border: 1px solid #777;
  border-radius: 3px;
  background: #f8f8f8;
}
.card input:checked { border-color: #0a5cad; background: #0a5cad; }
.card input:checked::after {
  content: "";
  display: block;
  width: 5px;
  height: 2px;
  margin: 3px 2px;
  border: solid #fff;
  border-width: 0 0 1px 1px;
  transform: rotate(-45deg);
}

.card .break .total { height: 20px; }
.card .total td:first-child { padding: 1px 0 0 635px; text-align: left; vertical-align: top; font-size: 12px; font-weight: normal; line-height: 15px; }
.total span { display: inline-block; width: 32px; margin-right: 2px; padding-right: 2px; border-top: 2px solid #000; text-align: right; }
.card .break .group { height: 38px; }
.card .group th { text-align: left; vertical-align: bottom; padding-bottom: 1px; font-size: 20px; line-height: 23px; font-style: italic; color: #888; }
.group button {
  width: 19px;
  height: 19px;
  margin: 0 8px 0 1px;
  border: 1px solid #ccd;
  border-radius: 3px;
  background: #fff;
  color: #00f;
  font: bold 20px/16px "Liberation Sans", Arial, sans-serif;
  vertical-align: 1px;
}

/* Status bar */
.statusbar { height: 14px; padding-left: 2px; background: #f0f0f0; font: 11px/13px "Noto Sans", sans-serif; color: #223; }

/* Taskbar */
.taskbar {
  display: grid;
  grid-template-columns: 1fr auto 1fr;
  align-items: center;
  height: 45px;
  background: linear-gradient(90deg, #1e2915, #1f2a18 20%, #1c2720 60%, #1a2424);
  color: #fff;
  font: 11px/15px "Noto Sans", sans-serif;
}
.weather { display: flex; align-items: center; gap: 9px; padding-left: 19px; }
.weather div span { color: #ccc; }
.sun { width: 19px; height: 19px; border-radius: 50%; background: linear-gradient(135deg, #fdc24a, #f0791a); }
.pinned { display: flex; align-items: center; gap: 3px; padding-left: 8px; }
.pinned button { position: relative; width: 38px; height: 38px; display: grid; place-items: center; }
.pinned button svg { width: 24px; height: 24px; }
.pinned .start { width: 22px; height: 22px; grid-template-columns: 10px 10px; gap: 1px; place-content: center; margin-right: 10px; }
.start i { width: 10px; height: 10px; background: linear-gradient(135deg, #6fdcfb, #1ba0ee); }
.search { display: flex; align-items: center; width: 204px; height: 28px; margin-right: 2px; padding: 0 1px 0 10px; border-radius: 14px; background: #f2f2f2; }
.search svg { flex: none; width: 14px; height: 14px; fill: none; stroke: #222; stroke-width: 1.5; }
.search input { flex: 1; min-width: 0; margin-left: 10px; padding: 0; border: 0; outline: 0; background: none; font: 13px "Noto Sans", sans-serif; }
.search input::placeholder { color: #666; opacity: 1; }
.search .scene { width: 48px; height: 24px; border-radius: 12px; stroke: none; }
.help span, .hp span { width: 22px; height: 22px; border-radius: 50%; border: 2px solid #e8f6fc; background: #0c8fc9; font: bold 18px/18px "Noto Sans", sans-serif; }
.hp span { background: #0a2fd0; font: italic bold 14px/15px "Noto Sans", sans-serif; }
.focused { border-radius: 4px; background: #333c30; }
.open::after { content: ""; position: absolute; left: 50%; bottom: 1px; width: 6px; height: 3px; margin-left: -3px; border-radius: 2px; background: #999; }
.focused::after { width: 16px; margin-left: -8px; background: #5cc4f5; }
.tray { display: flex; align-items: center; justify-content: flex-end; padding-right: 19px; }
.tray svg { flex: none; fill: none; stroke: #f2f2f2; }
.chevron { width: 10px; height: 10px; margin-right: 17px; }
.tray .cloud { width: 16px; height: 14px; margin-right: 14px; stroke: none; }
.wifi { width: 16px; height: 12px; margin-right: 6px; }
.sound { width: 16px; height: 12px; margin-right: 6px; }
.battery { width: 20px; height: 14px; margin-right: 15px; }
.clock { text-align: right; }
.tray .bell { width: 14px; height: 16px; margin-left: 7px; stroke: none; }
```
